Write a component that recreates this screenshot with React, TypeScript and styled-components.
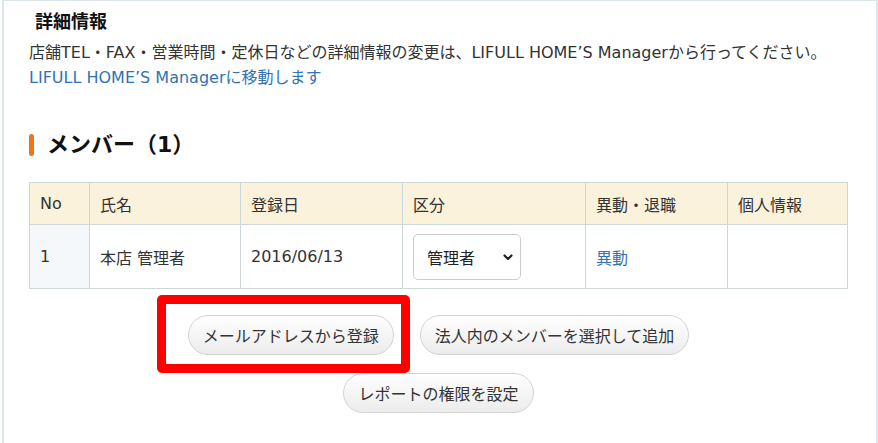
import React from 'react';
import styled, { createGlobalStyle } from 'styled-components';

const FONT = `"DejaVu Sans", "Noto Sans CJK JP", sans-serif`;

const GlobalStyle = createGlobalStyle`
    html, body {
        margin: 0;
        padding: 0;
        background: #fff;
    }
    body {
        font-family: ${FONT};
        color: #333;
    }
`;

type Member = {
    no: number;
    name: string;
    date: string;
    role: string;
};

const members: Member[] = [{ no: 1, name: '本店 管理者', date: '2016/06/13', role: '管理者' }];

const App: React.FC = () => {
    return (
        <>
            <GlobalStyle />
            <Panel>
                <DetailTitle>詳細情報</DetailTitle>
                <Description>
                    店舗TEL・FAX・営業時間・定休日などの詳細情報の変更は、LIFULL HOME’S Managerから行ってください。
                    <br />
                    <Link href="#">LIFULL HOME’S Managerに移動します</Link>
                </Description>

                <SectionTitle>メンバー（1）</SectionTitle>

                <Table>
                    <colgroup>
                        <col style={{ width: 60 }} />
                        <col style={{ width: 151 }} />
                        <col style={{ width: 162 }} />
                        <col style={{ width: 183 }} />
                        <col style={{ width: 142 }} />
                        <col />
                    </colgroup>
                    <thead>
                        <tr>
                            <Th>No</Th>
                            <Th>氏名</Th>
                            <Th>登録日</Th>
                            <Th>区分</Th>
                            <Th>異動・退職</Th>
                            <Th>個人情報</Th>
                        </tr>
                    </thead>
                    <tbody>
                        {members.map((m) => (
                            <tr key={m.no}>
                                <Td $shaded>{m.no}</Td>
                                <Td>{m.name}</Td>
                                <Td>{m.date}</Td>
                                <Td>
                                    <SelectBox>
                                        <span>{m.role}</span>
                                        <svg width="12" height="12" viewBox="0 0 12 12">
                                            <path d="M2.5 4.5l3.5 3.5 3.5-3.5" fill="none" stroke="#222" strokeWidth="2.2" strokeLinecap="round" strokeLinejoin="round" />
                                        </svg>
                                    </SelectBox>
                                </Td>
                                <Td>
                                    <Link href="#">異動</Link>
                                </Td>
                                <Td />
                            </tr>
                        ))}
                    </tbody>
                </Table>

                <ButtonArea>
                    <ButtonRow>
                        <Highlight>
                            <PillButton>メールアドレスから登録</PillButton>
                        </Highlight>
                        <PillButton>法人内のメンバーを選択して追加</PillButton>
                    </ButtonRow>
                    <ButtonRow>
                        <PillButton>レポートの権限を設定</PillButton>
                    </ButtonRow>
                </ButtonArea>
            </Panel>
        </>
    );
};
export default App;

const Panel = styled.div`
    box-sizing: border-box;
    margin-left: 2px;
    width: 876px;
    height: 443px;
    border: 2px solid #dde6e9;
    border-top-width: 1px;
    border-bottom: none;
    padding: 9px 28px 0 25px;
`;

const DetailTitle = styled.div`
    font-size: 18px;
    font-weight: 700;
    color: #111;
    margin-left: 6px;
    line-height: 24px;
`;

const Description = styled.div`
    font-size: 16px;
    line-height: 25px;
    margin-top: 6px;
    color: #333;
`;

const Link = styled.a`
    color: #2f73b4;
    text-decoration: none;
`;

const SectionTitle = styled.h2`
    margin: 43px 0 0;
    font-size: 22px;
    font-weight: 700;
    color: #111;
    line-height: 24px;
    display: flex;
    align-items: center;

    &::before {
        content: '';
        width: 5px;
        height: 22px;
        border-radius: 3px;
        background: #f0731e;
        margin-right: 13px;
    }
`;

const Table = styled.table`
    margin-top: 25px;
    width: 100%;
    border-collapse: collapse;
    table-layout: fixed;
    font-size: 16px;
`;

const Th = styled.th`
    height: 41px;
    padding: 0 10px;
    text-align: left;
    font-weight: 400;
    color: #333;
    background: #fbf2dc;
    border: 1px solid #cdd8dc;
`;

const Td = styled.td<{ $shaded?: boolean }>`
    height: 63px;
    padding: 0 10px;
    border: 1px solid #cdd8dc;
    background: ${(p) => (p.$shaded ? '#f5f8fa' : '#fff')};
    color: #333;
`;

const SelectBox = styled.div`
    box-sizing: border-box;
    width: 108px;
    height: 46px;
    border: 1px solid #c9ced1;
    border-radius: 5px;
    background: #fff;
    display: flex;
    align-items: center;
    justify-content: space-between;
    padding: 0 6px 0 13px;
    color: #222;
`;

const ButtonArea = styled.div`
    margin-top: 26px;
    display: flex;
    flex-direction: column;
    align-items: center;
    gap: 18px;
`;

const ButtonRow = styled.div`
    display: flex;
    justify-content: center;
    gap: 26px;
`;

const Highlight = styled.div`
    position: relative;

    &::after {
        content: '';
        position: absolute;
        left: -31px;
        right: -16px;
        top: -20px;
        bottom: -18px;
        border: 9px solid #ff0000;
        border-radius: 5px;
        pointer-events: none;
    }
`;

const PillButton = styled.button`
    box-sizing: border-box;
    height: 40px;
    padding: 0 14px;
    border: 1px solid #d3d3d3;
    border-radius: 20px;
    background: linear-gradient(#ffffff, #ececec);
    font-family: ${FONT};
    font-size: 16px;
    color: #333;
    cursor: pointer;
`;
